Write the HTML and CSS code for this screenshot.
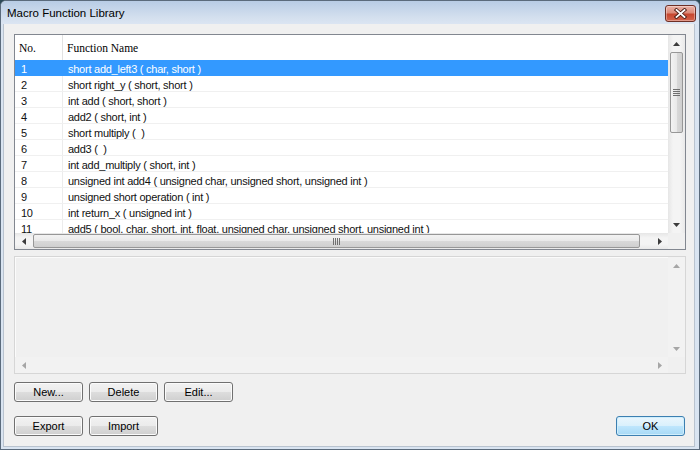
FILE: index.html
```html
<!DOCTYPE html>
<html lang="en">
<head>
    <meta charset="UTF-8">
    <title>Macro Function Library</title>
    <link rel="stylesheet" href="styles.css">
</head>
<body>
<div class="window">
    <div class="titlebar">
        <span class="title">Macro Function Library</span>
        <div class="close">
            <svg width="13" height="11" viewBox="0 0 13 11">
                <path class="x-dark" d="M2.5 2 L10.5 9 M10.5 2 L2.5 9"/>
                <path class="x-light" d="M2.5 2 L10.5 9 M10.5 2 L2.5 9"/>
            </svg>
        </div>
    </div>

    <div class="client">
        <!-- function list -->
        <div class="list">
            <div class="list-body">
                <div class="row head"><div class="num">No.</div><div class="name">Function Name</div></div>
                <div class="row selected"><div class="num">1</div><div class="name">short add_left3 ( char, short )</div></div>
                <div class="row"><div class="num">2</div><div class="name">short right_y ( short, short )</div></div>
                <div class="row"><div class="num">3</div><div class="name">int add ( short, short )</div></div>
                <div class="row"><div class="num">4</div><div class="name">add2 ( short, int )</div></div>
                <div class="row"><div class="num">5</div><div class="name">short multiply ( &nbsp;)</div></div>
                <div class="row"><div class="num">6</div><div class="name">add3 ( &nbsp;)</div></div>
                <div class="row"><div class="num">7</div><div class="name">int add_multiply ( short, int )</div></div>
                <div class="row"><div class="num">8</div><div class="name">unsigned int add4 ( unsigned char, unsigned short, unsigned int )</div></div>
                <div class="row"><div class="num">9</div><div class="name">unsigned short operation ( int )</div></div>
                <div class="row"><div class="num">10</div><div class="name">int return_x ( unsigned int )</div></div>
                <div class="row"><div class="num">11</div><div class="name">add5 ( bool, char, short, int, float, unsigned char, unsigned short, unsigned int )</div></div>
            </div>
            <div class="vscroll">
                <div class="arrow-box"><svg class="arrow" width="7" height="4"><polygon points="0,4 3.5,0 7,4"/></svg></div>
                <div class="vthumb">
                    <svg class="grip" width="7" height="7"><rect y="0" width="7" height="1"/><rect y="2" width="7" height="1"/><rect y="4" width="7" height="1"/><rect y="6" width="7" height="1"/></svg>
                </div>
                <div class="spacer"></div>
                <div class="arrow-box"><svg class="arrow" width="7" height="4"><polygon points="0,0 7,0 3.5,4"/></svg></div>
            </div>
            <div class="hscroll">
                <div class="arrow-box"><svg class="arrow" width="4" height="7"><polygon points="4,0 4,7 0,3.5"/></svg></div>
                <div class="hthumb">
                    <svg class="grip" width="7" height="7"><rect x="0" width="1" height="7"/><rect x="2" width="1" height="7"/><rect x="4" width="1" height="7"/><rect x="6" width="1" height="7"/></svg>
                </div>
                <div class="spacer"></div>
                <div class="arrow-box"><svg class="arrow" width="4" height="7"><polygon points="0,0 4,3.5 0,7"/></svg></div>
            </div>
            <div class="corner"></div>
        </div>

        <!-- description panel -->
        <div class="panel">
            <div class="panel-body"></div>
            <div class="vscroll">
                <div class="arrow-box"><svg class="arrow" width="7" height="4"><polygon points="0,4 3.5,0 7,4"/></svg></div>
                <div class="spacer"></div>
                <div class="arrow-box"><svg class="arrow" width="7" height="4"><polygon points="0,0 7,0 3.5,4"/></svg></div>
            </div>
            <div class="hscroll">
                <div class="arrow-box"><svg class="arrow" width="4" height="7"><polygon points="4,0 4,7 0,3.5"/></svg></div>
                <div class="spacer"></div>
                <div class="arrow-box"><svg class="arrow" width="4" height="7"><polygon points="0,0 4,3.5 0,7"/></svg></div>
            </div>
            <div class="corner"></div>
        </div>

        <div class="buttons">
            <button>New...</button>
            <button>Delete</button>
            <button>Edit...</button>
        </div>

        <div class="buttons bottom">
            <div class="group">
                <button>Export</button>
                <button>Import</button>
            </div>
            <button class="default">OK</button>
        </div>
    </div>
</div>
</body>
</html>
```

FILE: styles.css
```css
body { margin: 0; background: #2d4a58; font-family: "Liberation Sans", Arial, sans-serif; }
.window { width: 700px; height: 450px; box-sizing: border-box; border: 1px solid #5b6b7c; border-radius: 6px 6px 0 0; background: #d9e4f1; display: flex; flex-direction: column; overflow: hidden; }

.titlebar { height: 23px; flex: none; display: flex; justify-content: space-between; align-items: center; padding: 0 3px 0 6px; background: linear-gradient(#b8cce5, #d3dfee 70%, #dbe5f2); }
.title { font-size: 11.5px; color: #000; }
.close { align-self: flex-start; margin-top: 4px; width: 31px; height: 17px; box-sizing: border-box; border: 1px solid #6e2f26; border-radius: 3px; background: linear-gradient(#eab1a6, #dc8b79 45%, #c6472f 55%, #d4654d); box-shadow: inset 0 0 0 1px rgba(255, 255, 255, 0.35); display: flex; align-items: center; justify-content: center; }
.close path { fill: none; stroke-linecap: square; }
.x-dark { stroke: #4a1d15; stroke-width: 3.6; }
.x-light { stroke: #fff; stroke-width: 1.8; }

.client { flex: 1; margin: 0 4px 2px 2px; background: #f0f0f0; padding: 10px 8px 0 10px; border: 1px solid #b9c3cf; border-top: none; }

.list { height: 216px; box-sizing: border-box; border: 1px solid #828790; background: #fff; display: grid; grid-template-columns: 1fr 17px; grid-template-rows: 198px 16px; }
.list-body { overflow: hidden; }
.row { display: flex; height: 15px; border-bottom: 1px solid #f0f0f0; font-size: 11px; letter-spacing: -0.25px; line-height: 18px; color: #111; white-space: nowrap; }
.row .num { width: 48px; flex: none; box-sizing: border-box; padding-left: 6px; border-right: 1px solid #ececec; }
.row .name { padding-left: 5px; }
.row.head { height: 25px; line-height: 26px; border-bottom: none; font-family: "Liberation Serif", "Times New Roman", serif; font-size: 11.5px; letter-spacing: 0; color: #000; }
.row.head .num { padding-left: 4px; border-right-color: #e2e2e2; }
.row.head .name { padding-left: 4px; }
.row.selected { background: #3399ff; color: #fff; border-bottom-color: #3399ff; }
.row.selected .num { border-right-color: #3399ff; }

.vscroll { display: flex; flex-direction: column; background: linear-gradient(to right, #e6e6e6, #f4f4f4 30%, #f4f4f4 70%, #e9e9e9); }
.hscroll { display: flex; background: linear-gradient(#e6e6e6, #f4f4f4 30%, #f4f4f4 70%, #e9e9e9); }
.corner { background: #f0f0f0; }
.spacer { flex: 1; }
.arrow-box { width: 17px; height: 17px; flex: none; display: flex; align-items: center; justify-content: center; }
.hscroll .arrow-box { height: 16px; }
.arrow { fill: #3c3c3c; }
.grip { fill: #6f6f6f; }

.vthumb { height: 81px; width: 13px; margin: 0 auto; box-sizing: border-box; border: 1px solid #979797; border-radius: 2px; background: linear-gradient(to right, #f3f3f3, #e9e9e9 50%, #d9d9d9 51%, #cfcfcf); display: flex; align-items: center; justify-content: center; }
.hthumb { width: 607px; height: 14px; margin: 1px 0 0 1px; box-sizing: border-box; border: 1px solid #979797; border-radius: 2px; background: linear-gradient(#f3f3f3, #e9e9e9 50%, #d9d9d9 51%, #cfcfcf); display: flex; align-items: center; justify-content: center; }

.panel { margin-top: 6px; height: 118px; box-sizing: border-box; border: 1px solid #d6d6d6; box-shadow: inset 1px 1px 0 #fbfbfb; background: #f0f0f0; display: grid; grid-template-columns: 1fr 17px; grid-template-rows: 1fr 16px; }
.panel .vscroll, .panel .hscroll { background: #f2f2f2; }
.panel .arrow { fill: #a6a6a6; }

.buttons { display: flex; gap: 6px; margin-top: 8px; }
.buttons.bottom { margin-top: 14px; justify-content: space-between; padding-right: 1px; }
.group { display: flex; gap: 6px; }
button { width: 69px; height: 20px; padding: 0; font-family: "Liberation Sans", Arial, sans-serif; font-size: 11px; color: #000; border: 1px solid #707070; border-radius: 3px; background: linear-gradient(#f2f2f2, #ebebeb 50%, #dddddd 51%, #cfcfcf); box-shadow: inset 0 0 0 1px #fbfbfb; }
button.default { border-color: #3c7fb1; background: linear-gradient(#eaf6fd, #d9f0fc 50%, #bee6fd 51%, #a7d9f5); box-shadow: inset 0 0 0 1px #cfeefc; }
```
